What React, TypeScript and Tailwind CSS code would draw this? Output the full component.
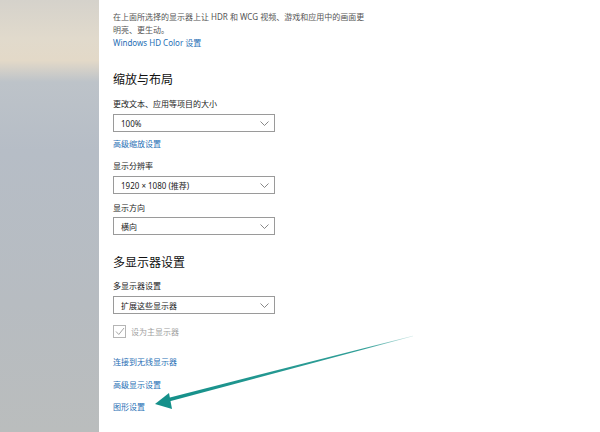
import React from "react";

const font = { fontFamily: '"Noto Sans", "Noto Sans CJK SC", sans-serif' };

function Chevron() {
  return (
    <svg width="9" height="5" viewBox="0 0 9 5" className="mr-[5px]">
      <path d="M0.5 0.5 L4.5 4.5 L8.5 0.5" fill="none" stroke="#7a7a7a" strokeWidth="0.9" />
    </svg>
  );
}

function Dropdown({ value, className = "" }: { value: string; className?: string }) {
  return (
    <div
      className={`w-[162px] h-[18px] border border-[#9a9a9a] bg-white flex items-center justify-between pl-[7px] ${className}`}
    >
      <span className="text-[8px] leading-[13px] text-[#222]">{value}</span>
      <Chevron />
    </div>
  );
}

function Label({ children, className = "" }: { children: React.ReactNode; className?: string }) {
  return <div className={`text-[8px] leading-[13px] h-[13px] text-[#1a1a1a] ${className}`}>{children}</div>;
}

function Link({ children, className = "" }: { children: React.ReactNode; className?: string }) {
  return <div className={`text-[8px] leading-[13px] h-[13px] text-[#1f6fb5] ${className}`}>{children}</div>;
}

function Heading({ children, className = "" }: { children: React.ReactNode; className?: string }) {
  return <div className={`text-[12px] leading-[18px] h-[18px] text-[#111] ${className}`}>{children}</div>;
}

export default function App() {
  return (
    <div className="relative w-[600px] h-[432px] overflow-hidden bg-white flex" style={font}>
      <div className="w-[99px] h-full shrink-0 bg-[linear-gradient(to_bottom,#d5d2cb_0%,#e1dacc_9%,#e3d9c8_14%,#bdc3c9_19%,#b6bdc6_35%,#b7bcc1_70%,#babdbd_100%)]" />
      <div className="flex flex-col pl-[14px] pt-[10px]">
        <div className="text-[8px] leading-[13px] text-[#555]">
          在上面所选择的显示器上让 HDR 和 WCG 视频、游戏和应用中的画面更
          <br />
          明亮、更生动。
        </div>
        <Link>Windows HD Color 设置</Link>
        <Heading className="mt-[22px]">缩放与布局</Heading>
        <Label className="mt-[8px]">更改文本、应用等项目的大小</Label>
        <Dropdown value="100%" className="mt-[4px]" />
        <Link className="mt-[5px]">高级缩放设置</Link>
        <Label className="mt-[9px]">显示分辨率</Label>
        <Dropdown value="1920 × 1080 (推荐)" className="mt-[4px]" />
        <Label className="mt-[7px]">显示方向</Label>
        <Dropdown value="横向" className="mt-[3px]" />
        <Heading className="mt-[19px]">多显示器设置</Heading>
        <Label className="mt-[7px]">多显示器设置</Label>
        <Dropdown value="扩展这些显示器" className="mt-[4px]" />
        <div className="mt-[10px] flex items-center h-[14px]">
          <div className="w-[13px] h-[13px] border border-[#b5b5b5] flex items-center justify-center">
            <svg width="10" height="9" viewBox="0 0 10 9">
              <path d="M1 4.5 L3.8 7.5 L9 1" fill="none" stroke="#a5a5a5" strokeWidth="1" />
            </svg>
          </div>
          <span className="ml-[5px] text-[8px] leading-[13px] text-[#a0a0a0]">设为主显示器</span>
        </div>
        <Link className="mt-[17px]">连接到无线显示器</Link>
        <Link className="mt-[10px]">高级显示设置</Link>
        <Link className="mt-[9px]">图形设置</Link>
      </div>
      <svg className="absolute left-0 top-0 pointer-events-none" width="600" height="432" viewBox="0 0 600 432">
        <defs>
          <linearGradient id="ar" x1="413" y1="336" x2="170" y2="400" gradientUnits="userSpaceOnUse">
            <stop offset="0" stopColor="#1a948c" stopOpacity="0.2" />
            <stop offset="0.2" stopColor="#1a948c" stopOpacity="0.9" />
            <stop offset="1" stopColor="#15908a" />
          </linearGradient>
        </defs>
        <polygon points="413,335.8 413,336.2 168,401.8 166,398.4" fill="url(#ar)" />
        <polygon points="155,404 169,393 172,409" fill="#15908a" />
      </svg>
    </div>
  );
}
